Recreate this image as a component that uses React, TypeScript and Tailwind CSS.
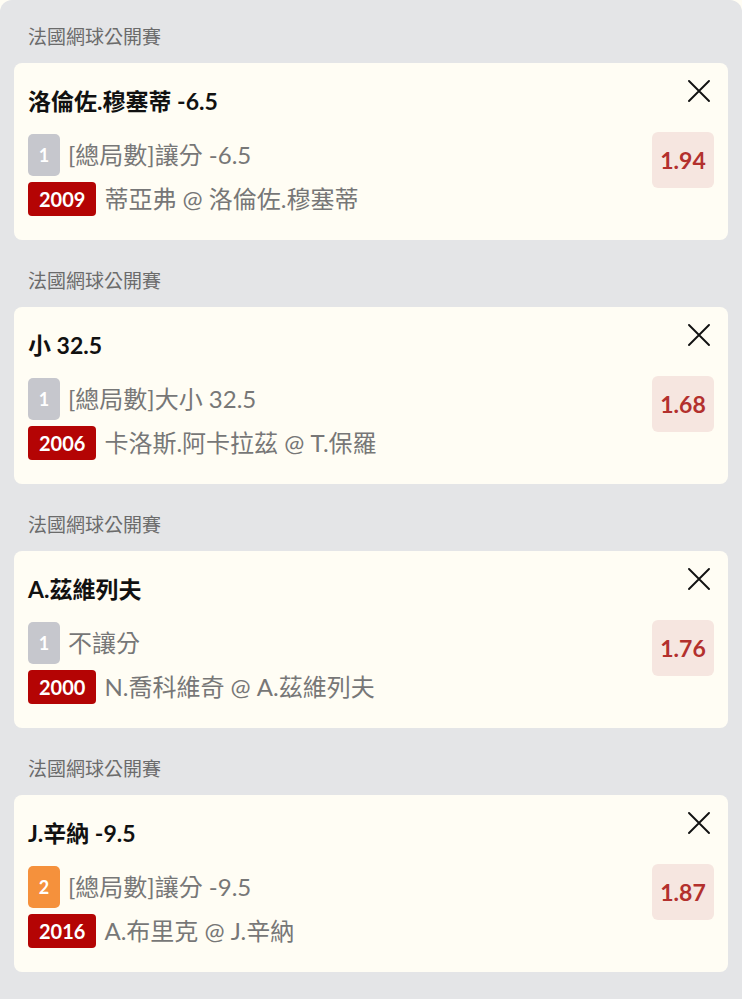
import React from 'react';

type Bet = {
  league: string;
  title: string;
  seq: string;
  seqColor: 'gray' | 'orange';
  market: string;
  code: string;
  match: string;
  odds: string;
};

const bets: Bet[] = [
  {
    league: '法國網球公開賽',
    title: '洛倫佐.穆塞蒂 -6.5',
    seq: '1',
    seqColor: 'gray',
    market: '[總局數]讓分 -6.5',
    code: '2009',
    match: '蒂亞弗 @ 洛倫佐.穆塞蒂',
    odds: '1.94',
  },
  {
    league: '法國網球公開賽',
    title: '小 32.5',
    seq: '1',
    seqColor: 'gray',
    market: '[總局數]大小 32.5',
    code: '2006',
    match: '卡洛斯.阿卡拉茲 @ T.保羅',
    odds: '1.68',
  },
  {
    league: '法國網球公開賽',
    title: 'A.茲維列夫',
    seq: '1',
    seqColor: 'gray',
    market: '不讓分',
    code: '2000',
    match: 'N.喬科維奇 @ A.茲維列夫',
    odds: '1.76',
  },
  {
    league: '法國網球公開賽',
    title: 'J.辛納 -9.5',
    seq: '2',
    seqColor: 'orange',
    market: '[總局數]讓分 -9.5',
    code: '2016',
    match: 'A.布里克 @ J.辛納',
    odds: '1.87',
  },
];

const font = { fontFamily: 'Lato, "Noto Sans CJK TC", sans-serif' };

function CloseIcon() {
  return (
    <svg width="22" height="22" viewBox="0 0 22 22" className="mr-[4px]">
      <path d="M1 1 L21 21 M21 1 L1 21" stroke="#111" strokeWidth="1.9" strokeLinecap="round" />
    </svg>
  );
}

function BetCard({ bet }: { bet: Bet }) {
  return (
    <div className="flex flex-col">
      {/* League header */}
      <div className="h-[26px] leading-[26px] pl-[28px] text-[19px] text-[#6b6b6b]">{bet.league}</div>

      <div className="mt-[13px] mx-[14px] h-[177px] rounded-[8px] bg-[#fffdf4] pt-[17px] px-[14px] flex justify-between">
        <div className="flex flex-col">
          <div className="mt-[5px] h-[32px] leading-[32px] text-[23px] font-bold text-[#111]">{bet.title}</div>

          <div className="mt-[16px] h-[44px] flex items-center gap-[8px]">
            <span
              className={`w-[32px] h-[42px] rounded-[5px] flex items-center justify-center text-white text-[18px] font-bold ${
                bet.seqColor === 'orange' ? 'bg-[#f5913c]' : 'bg-[#c6c7cd]'
              }`}
            >
              {bet.seq}
            </span>
            <span className="text-[24px] text-[#777777]">{bet.market}</span>
          </div>

          <div className="mt-[3px] h-[38px] flex items-center gap-[8px]">
            <span className="h-[34px] px-[11px] rounded-[4px] bg-[#b40404] flex items-center text-white text-[20px] font-bold">
              {bet.code}
            </span>
            <span className="text-[24px] text-[#777777]">{bet.match}</span>
          </div>
        </div>

        <div className="flex flex-col items-end">
          <CloseIcon />
          <div className="mt-[30px] w-[62px] h-[56px] rounded-[6px] bg-[#f6e6e0] flex items-center justify-center text-[23px] font-bold text-[#b3302d]">
            {bet.odds}
          </div>
        </div>
      </div>
    </div>
  );
}

export default function App() {
  return (
    <div className="bg-[#fffdf4]" style={font}>
      <div className="bg-[#e4e5e7] rounded-t-[12px] pt-[24px] pb-[27px] flex flex-col gap-[28px]">
        {bets.map((b, i) => (
          <BetCard key={i} bet={b} />
        ))}
      </div>
    </div>
  );
}
